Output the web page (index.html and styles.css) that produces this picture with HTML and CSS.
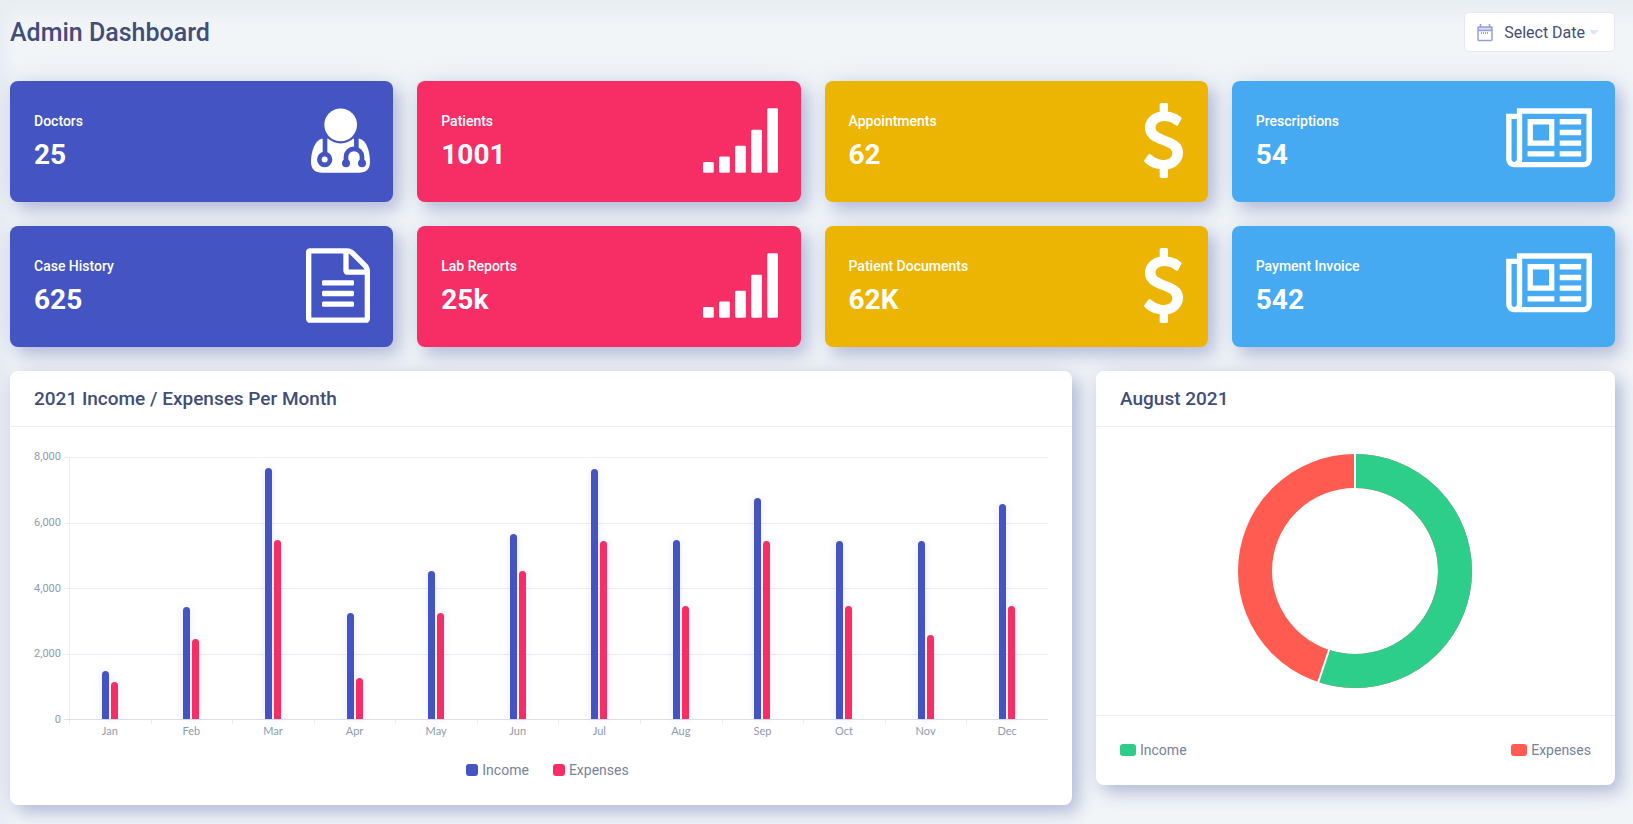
FILE: index.html
```html
<!DOCTYPE html>
<html lang="en">
<head>
<meta charset="utf-8">
<meta name="viewport" content="width=device-width, initial-scale=1">
<title>Admin Dashboard</title>
<link rel="stylesheet" href="styles.css">
</head>
<body>
<svg class="sprite" aria-hidden="true">
  <symbol id="icon-doctor" viewBox="933 309 177 224">
    <path fill="currentColor" d="M968 415C944 419 933 455 933 485Q933 518 967 518H1076Q1110 518 1110 485C1110 455 1100 419 1076 415Z"/>
    <circle class="cut" cx="1022" cy="374" r="56"/>
    <circle fill="currentColor" cx="1022" cy="374" r="49"/>
    <path class="cut" d="M968 412h14v46h-14zM1062 412h14v32h-14z"/>
    <circle class="cut" cx="974" cy="478" r="23"/>
    <circle fill="currentColor" cx="974" cy="478" r="9"/>
    <path class="cut-line" d="M1038 489V470a24 24 0 0 1 48 0v19"/>
    <circle class="cut" cx="1038" cy="489" r="12"/>
    <circle class="cut" cx="1086" cy="489" r="12"/>
  </symbol>
  <symbol id="icon-file" viewBox="128 0 1536 1792">
    <path fill="currentColor" d="M1596 380q28 28 48 76t20 88v1152q0 40-28 68t-68 28h-1344q-40 0-68-28t-28-68v-1600q0-40 28-68t68-28h896q40 0 88 20t76 48zm-444-244v376h376q-10-29-22-41l-313-313q-12-12-41-22zm384 1528v-1024h-416q-40 0-68-28t-28-68v-416h-768v1536h1280zm-1024-864q0-14 9-23t23-9h704q14 0 23 9t9 23v64q0 14-9 23t-23 9h-704q-14 0-23-9t-9-23v-64zm736 224q14 0 23 9t9 23v64q0 14-9 23t-23 9h-704q-14 0-23-9t-9-23v-64q0-14 9-23t23-9h704zm0 256q14 0 23 9t9 23v64q0 14-9 23t-23 9h-704q-14 0-23-9t-9-23v-64q0-14 9-23t23-9h704z"/>
  </symbol>
  <symbol id="icon-signal" viewBox="0 0 1792 1792">
    <g fill="currentColor">
      <rect x="0" y="1408" width="256" height="256" rx="30"/>
      <rect x="384" y="1280" width="256" height="384" rx="30"/>
      <rect x="768" y="1024" width="256" height="640" rx="30"/>
      <rect x="1152" y="640" width="256" height="1024" rx="30"/>
      <rect x="1536" y="128" width="256" height="1536" rx="30"/>
    </g>
  </symbol>
  <symbol id="icon-dollar" viewBox="384 0 1024 1792">
    <path fill="currentColor" d="M1362 1185q0 153-99.500 263.500t-258.500 136.500v175q0 14-9 23t-23 9h-135q-13 0-22.500-9.500t-9.500-22.500v-175q-66-9-127.500-31t-101.500-44.500-74-48-46.500-37.500-17.500-18q-17-21-2-41l103-135q7-10 23-12 15-2 24 9l2 2q113 99 243 125 37 8 74 8 81 0 142.500-43t61.500-122q0-28-15-53t-33.500-42-58.500-37.500-66-32-80-32.500q-39-16-61.500-25t-61.500-26.500-62.500-31-56.500-35.500-53.500-42.500-43.500-49-35.500-58-21-66.500-8.500-78q0-138 98-242t255-134v-180q0-13 9.500-22.500t22.500-9.500h135q14 0 23 9t9 23v176q57 6 110.500 23t87 33.500 63.500 37.500 39 29 15 14q17 18 5 38l-81 146q-8 15-23 16-14 3-27-7-3-3-14.500-12t-39-26.500-58.500-32-74.500-26-85.500-11.500q-95 0-155 43t-60 111q0 26 8.500 48t29.500 41.500 39.500 33 56 31 60.500 27 70 27.500q53 20 81 31.500t76 35 75.500 42.500 62 50 53 63.500 31.500 76.500 13 94z"/>
  </symbol>
  <symbol id="icon-news" viewBox="0 0 2048 1792">
    <path fill="currentColor" d="M1024 512h-384v384h384v-384zm128 640v128h-640v-128h640zm0-768v640h-640v-640h640zm640 768v128h-512v-128h512zm0-256v128h-512v-128h512zm0-256v128h-512v-128h512zm0-256v128h-512v-128h512zm-1536 960v-960h-128v960q0 26 19 45t45 19 45-19 19-45zm1664 0v-1088h-1536v1088q0 33-11 64h1483q26 0 45-19t19-45zm128-1216v1216q0 80-56 136t-136 56h-1664q-80 0-136-56t-56-136v-1088h256v-128h1792z"/>
  </symbol>
</svg>
<main class="page">
  <header class="topbar">
    <h1 class="title">Admin Dashboard</h1>
    <button class="date-button" type="button">
      <svg class="calendar" viewBox="0 0 16 18" aria-hidden="true">
        <path class="calendar-head" d="M1 3h14v3H1z"/>
        <path class="calendar-line" d="M1.500 3h13a.5.5 0 0 1 .5.5v12a1 1 0 0 1-1 1H2a1 1 0 0 1-1-1v-12a.5.5 0 0 1 .5-.5zM1 6.500h14M3.500 0v3M12.500 0v3"/>
        <path class="calendar-dots" d="M4 9h8"/>
      </svg>
      <span>Select Date</span>
      <svg class="caret" viewBox="0 0 10 5" aria-hidden="true"><path d="M0 0h10L5 5z"/></svg>
    </button>
  </header>

  <section class="cards" aria-label="Totals">
    <article class="card indigo"><div class="card-text"><h2 class="card-label">Doctors</h2><p class="card-value">25</p></div><svg class="icon narrow"><use href="#icon-doctor"/></svg></article>
    <article class="card pink"><div class="card-text"><h2 class="card-label">Patients</h2><p class="card-value">1001</p></div><svg class="icon square"><use href="#icon-signal"/></svg></article>
    <article class="card amber"><div class="card-text"><h2 class="card-label">Appointments</h2><p class="card-value">62</p></div><svg class="icon slim"><use href="#icon-dollar"/></svg></article>
    <article class="card sky"><div class="card-text"><h2 class="card-label">Prescriptions</h2><p class="card-value">54</p></div><svg class="icon wide"><use href="#icon-news"/></svg></article>
    <article class="card indigo"><div class="card-text"><h2 class="card-label">Case History</h2><p class="card-value">625</p></div><svg class="icon sheet"><use href="#icon-file"/></svg></article>
    <article class="card pink"><div class="card-text"><h2 class="card-label">Lab Reports</h2><p class="card-value">25k</p></div><svg class="icon square"><use href="#icon-signal"/></svg></article>
    <article class="card amber"><div class="card-text"><h2 class="card-label">Patient Documents</h2><p class="card-value">62K</p></div><svg class="icon slim"><use href="#icon-dollar"/></svg></article>
    <article class="card sky"><div class="card-text"><h2 class="card-label">Payment Invoice</h2><p class="card-value">542</p></div><svg class="icon wide"><use href="#icon-news"/></svg></article>
  </section>

  <div class="panels">
    <section class="panel">
      <h2 class="panel-title">2021 Income / Expenses Per Month</h2>
      <div class="panel-body">
        <div class="chart">
          <div class="scale"><span>8,000</span><span>6,000</span><span>4,000</span><span>2,000</span><span>0</span></div>
          <div class="rules"><i></i><i></i><i></i><i></i></div>
          <div class="plot">
            <div class="month"><b class="bar income" style="height:18.3%"></b><b class="bar expense" style="height:14.1%"></b></div>
            <div class="month"><b class="bar income" style="height:42.9%"></b><b class="bar expense" style="height:30.5%"></b></div>
            <div class="month"><b class="bar income" style="height:95.8%"></b><b class="bar expense" style="height:68.3%"></b></div>
            <div class="month"><b class="bar income" style="height:40.6%"></b><b class="bar expense" style="height:15.6%"></b></div>
            <div class="month"><b class="bar income" style="height:56.5%"></b><b class="bar expense" style="height:40.6%"></b></div>
            <div class="month"><b class="bar income" style="height:70.6%"></b><b class="bar expense" style="height:56.5%"></b></div>
            <div class="month"><b class="bar income" style="height:95.4%"></b><b class="bar expense" style="height:68.1%"></b></div>
            <div class="month"><b class="bar income" style="height:68.5%"></b><b class="bar expense" style="height:43.1%"></b></div>
            <div class="month"><b class="bar income" style="height:84.5%"></b><b class="bar expense" style="height:68.1%"></b></div>
            <div class="month"><b class="bar income" style="height:68.1%"></b><b class="bar expense" style="height:43.1%"></b></div>
            <div class="month"><b class="bar income" style="height:68.1%"></b><b class="bar expense" style="height:32%"></b></div>
            <div class="month"><b class="bar income" style="height:81.9%"></b><b class="bar expense" style="height:43.1%"></b></div>
          </div>
          <div class="months"><span>Jan</span><span>Feb</span><span>Mar</span><span>Apr</span><span>May</span><span>Jun</span><span>Jul</span><span>Aug</span><span>Sep</span><span>Oct</span><span>Nov</span><span>Dec</span></div>
        </div>
        <ul class="legend centered">
          <li><i class="swatch income"></i>Income</li>
          <li><i class="swatch expense"></i>Expenses</li>
        </ul>
      </div>
    </section>

    <section class="panel">
      <h2 class="panel-title">August 2021</h2>
      <div class="donut-area">
        <svg class="donut" viewBox="-117 -117 234 234" role="img" aria-label="Income 55%, expenses 45%">
          <circle class="ring red" r="100"/>
          <circle class="ring green" r="100" pathLength="100" stroke-dasharray="55 45" transform="rotate(-90)"/>
          <path class="split" d="M0-118V-80M-25 76L-37 112"/>
        </svg>
      </div>
      <ul class="legend spread">
        <li><i class="swatch long green"></i>Income</li>
        <li><i class="swatch long red"></i>Expenses</li>
      </ul>
    </section>
  </div>
</main>
</body>
</html>
```
FILE: styles.css
```css
* { box-sizing: border-box; }
:root {
  --indigo: #4454c3;
  --pink: #f72d66;
  --amber: #ecb403;
  --sky: #45aaf2;
  --green: #2dce89;
  --red: #ff5b51;
  --ink: #424e79;
  --muted: #76839a;
  --line: #ebecf4;
}
body {
  margin: 0;
  min-height: 100vh;
  font-family: Roboto, "Liberation Sans", sans-serif;
  color: var(--ink);
  background:
    linear-gradient(to bottom, #e8edf2, transparent 28px),
    linear-gradient(to right, #e8edf5, transparent 16px),
    #f1f5f8;
}
h1, h2, p, ul { margin: 0; padding: 0; }
.sprite { display: none; }
.page { padding: 12px 18px 18px 10px; }
.topbar {
  display: flex;
  justify-content: space-between;
  align-items: center;
  margin-bottom: 29px;
}
.title { padding-top: 2px; font-size: 25px; line-height: 32px; font-weight: 500; }
.date-button {
  display: flex;
  align-items: center;
  height: 40px;
  padding: 1px 15px 0 12px;
  border: 1px solid #e6e8f3;
  border-radius: 5px;
  background: #fff;
  color: var(--ink);
  font: 16px/24px Roboto, "Liberation Sans", sans-serif;
}
.calendar { width: 16px; height: 18px; margin-right: 11px; fill: none; stroke: #959edb; }
.calendar-line { stroke-width: 1.500; }
.calendar-head { fill: #d5d9f2; stroke: none; }
.calendar-dots { stroke-width: 2; stroke-dasharray: 1 1; }
.caret { width: 10px; height: 5px; margin-left: 4px; fill: #e2e5ec; }

.cards { display: grid; grid-template-columns: repeat(4, 1fr); gap: 24px; margin-bottom: 24px; }
.card, .panel {
  border-radius: 8px;
  box-shadow: 7px 8px 15px rgba(69, 80, 160, .28), 0 0 28px rgba(100, 115, 165, .14);
}
.card {
  display: flex;
  justify-content: space-between;
  align-items: center;
  height: 121px;
  padding: 0 23px 2px 24px;
  color: #fff;
  background: var(--tone);
}
.card-text { padding-top: 2px; }
.card-label { font-size: 14px; line-height: 20px; font-weight: 500; margin-bottom: 7px; }
.card-value { font-size: 28px; line-height: 34px; font-weight: 700; }
.indigo { --tone: var(--indigo); }
.pink { --tone: var(--pink); }
.amber { --tone: var(--amber); }
.sky { --tone: var(--sky); }
.icon { height: 75px; }
.narrow { width: 59px; }
.sheet { width: 64px; }
.square { width: 75px; }
.slim { width: 43px; }
.wide { width: 86px; }
.cut { fill: var(--tone); }
.cut-line { fill: none; stroke: var(--tone); stroke-width: 14; }

.panels { display: grid; grid-template-columns: repeat(12, 1fr); gap: 24px; align-items: start; }
.panel { grid-column: span 4; background: #fff; }
.panel:first-child { grid-column: span 8; }
.panel-title {
  padding: 16px 24px 15px;
  border-bottom: 1px solid var(--line);
  font-size: 19px;
  line-height: 24px;
  font-weight: 500;
}
.panel-body { padding: 21px 24px 25px; }
.chart {
  display: grid;
  grid-template-columns: 31px 1fr;
  grid-template-rows: 9px 263px 17px;
  column-gap: 4px;
  color: #8c9bb0;
  font-size: 11px;
  line-height: 16px;
}
.scale {
  grid-area: 1 / 1 / 4 / 2;
  display: flex;
  flex-direction: column;
  justify-content: space-between;
  height: 280px;
  padding: 1px 4px 0 0;
  text-align: right;
}
.rules { grid-area: 2 / 2; display: grid; grid-template-rows: repeat(4, 1fr); margin-left: -5px; border-bottom: 1px solid #dcdfeb; }
.rules i { border-top: 1px solid var(--line); }
.plot { grid-area: 2 / 2; display: grid; grid-template-columns: repeat(12, 1fr); box-shadow: inset 1px 0 var(--line); margin-bottom: 1px; }
.month { display: flex; justify-content: center; align-items: flex-end; gap: 2px; }
.bar { width: 7px; border-radius: 4px 4px 0 0; box-shadow: 0 0 8px rgba(68, 84, 195, .12); }
.income { background: var(--indigo); }
.expense { background: var(--pink); }
.months {
  grid-area: 3 / 2;
  display: grid;
  grid-template-columns: repeat(12, 1fr);
  padding-top: 3px;
  text-align: center;
  font-family: Lato, "Noto Sans", sans-serif;
  background: repeating-linear-gradient(to right, var(--line) 0 1px, transparent 1px calc(100% / 12)) top / 100% 4px no-repeat;
}
.legend { display: flex; list-style: none; font-size: 14px; line-height: 20px; color: var(--muted); }
.legend li { display: flex; align-items: center; gap: 4px; }
.centered { justify-content: center; gap: 24px; margin-top: 23px; padding-left: 13px; }
.spread { justify-content: space-between; padding: 24px 24px 25px; border-top: 1px solid var(--line); }
.swatch { width: 12px; height: 12px; border-radius: 3px; }
.long { width: 16px; }
.green { background: var(--green); stroke: var(--green); }
.red { background: var(--red); stroke: var(--red); }
.ring { background: none; fill: none; stroke-width: 34; }
.donut-area { display: flex; justify-content: center; padding: 27px 25px 27px 24px; }
.donut { width: 234px; height: 234px; }
.split { stroke: #fff; stroke-width: 2; }
```
